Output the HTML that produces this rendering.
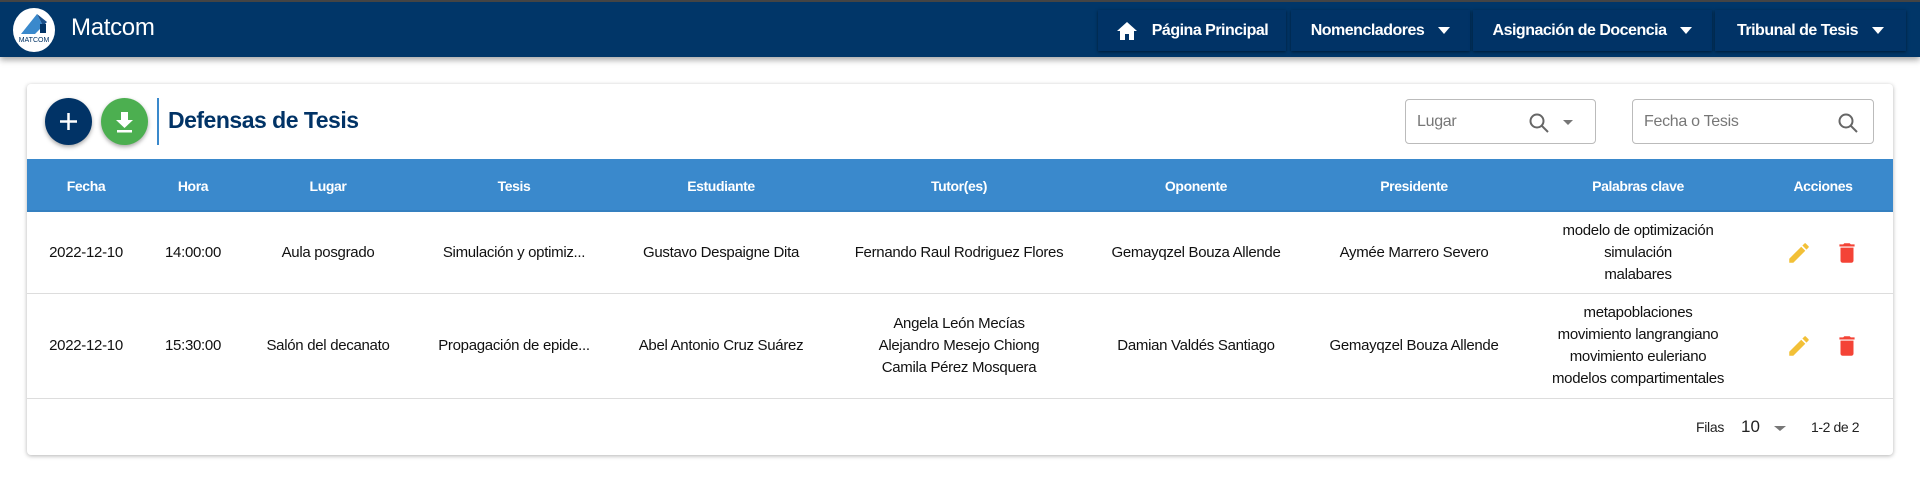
<!DOCTYPE html>
<html><head><meta charset="utf-8"><style>
*{box-sizing:border-box;margin:0;padding:0}
body{width:1920px;height:495px;background:#fff;font-family:"Liberation Sans",sans-serif;position:relative;overflow:hidden;color:#222}
.hdr{position:absolute;left:0;top:0;width:1920px;height:57px;background:#013668;box-shadow:0 3px 6px rgba(0,0,0,.35);border-top:2px solid #444}
.logo{position:absolute;left:13px;top:6px;width:42px;height:44px;border-radius:50%;background:#fff;overflow:hidden}
.brand{position:absolute;left:71px;top:12px;color:#fff;font-size:24px;letter-spacing:-.3px}
.nav{position:absolute;top:8px;height:41px;background:#013366;box-shadow:0 1px 3px rgba(0,0,0,.5);color:#fff;font-weight:bold;font-size:16px;display:flex;align-items:center;justify-content:center;gap:14px;letter-spacing:-.5px}
.caret{width:0;height:0;border-left:6px solid transparent;border-right:6px solid transparent;border-top:7px solid #fff}
.card{position:absolute;left:27px;top:84px;width:1866px;height:371px;border-radius:4px;box-shadow:0 1px 4px rgba(0,0,0,.3);background:#fff}
.fab{position:absolute;top:98px;width:47px;height:47px;border-radius:50%;box-shadow:0 2px 4px rgba(0,0,0,.35)}
.title{position:absolute;left:168px;top:107px;font-size:23px;font-weight:bold;color:#013366;letter-spacing:-.5px}
.inp{position:absolute;top:99px;height:45px;border:1px solid #bbb;border-radius:4px;color:#777;font-size:16px;padding:13px 11px;letter-spacing:-.3px}
.th{position:absolute;left:27px;top:159px;width:1866px;height:53px;background:#3a89cc;border-bottom:2px solid #3580c0}
.c{position:absolute;transform:translateX(-50%);text-align:center;white-space:nowrap}
.th .c{color:#fff;font-weight:bold;font-size:14px;top:19px;letter-spacing:-.4px}
.row{position:absolute;left:27px;width:1866px;border-bottom:1px solid #ddd;font-size:15px;color:#111;letter-spacing:-.3px}
.row .c{line-height:22px}
</style></head><body>
<div class="hdr">
 <div class="logo"><svg width="42" height="44" viewBox="0 0 42 44"><polygon points="8,26 24,6 30,18 22,26" fill="#3a89cc"/><polygon points="24,6 34,14 30,18" fill="#1a4f8a"/><rect x="27" y="16" width="6" height="9" fill="#013366"/><text x="21" y="34" font-size="7" text-anchor="middle" fill="#013366" font-family="Liberation Sans">MATCOM</text></svg></div>
 <div class="brand">Matcom</div>
 <div class="nav" style="left:1098px;width:188px"><svg width="22" height="20" viewBox="0 0 22 20"><path d="M11 1L1 10h3v9h5v-6h4v6h5v-9h3z" fill="#fff"/></svg><span>Página Principal</span></div>
 <div class="nav" style="left:1291px;width:179px"><span>Nomencladores</span><span class="caret"></span></div>
 <div class="nav" style="left:1473px;width:239px"><span>Asignación de Docencia</span><span class="caret"></span></div>
 <div class="nav" style="left:1715px;width:191px"><span>Tribunal de Tesis</span><span class="caret"></span></div>
</div>
<div class="card"></div>
<div class="fab" style="left:45px;background:#013366"><svg width="47" height="47"><path d="M23.5 15v17M15 23.5h17" stroke="#fff" stroke-width="2.5"/></svg></div>
<div class="fab" style="left:101px;background:#4caf50"><svg width="47" height="47"><path d="M20 14h7v8h5l-8.5 8-8.5-8h5z" fill="#fff"/><rect x="16" y="32" width="15" height="2.5" fill="#fff"/></svg></div>
<div style="position:absolute;left:157px;top:98px;width:2px;height:47px;background:#3a89cc"></div>
<div class="title">Defensas de Tesis</div>
<div class="inp" style="left:1405px;width:191px">Lugar
 <svg style="position:absolute;left:122px;top:12px" width="22" height="22"><circle cx="9" cy="9" r="6.5" fill="none" stroke="#666" stroke-width="2"/><path d="M14 14l6 6" stroke="#666" stroke-width="2"/></svg>
 <span style="position:absolute;left:157px;top:20px;border-left:5px solid transparent;border-right:5px solid transparent;border-top:5px solid #777"></span></div>
<div class="inp" style="left:1632px;width:242px">Fecha o Tesis
 <svg style="position:absolute;left:204px;top:12px" width="22" height="22"><circle cx="9" cy="9" r="6.5" fill="none" stroke="#666" stroke-width="2"/><path d="M14 14l6 6" stroke="#666" stroke-width="2"/></svg></div>
<div class="th">
 <span class="c" style="left:59px">Fecha</span><span class="c" style="left:166px">Hora</span><span class="c" style="left:301px">Lugar</span><span class="c" style="left:487px">Tesis</span><span class="c" style="left:694px">Estudiante</span><span class="c" style="left:932px">Tutor(es)</span><span class="c" style="left:1169px">Oponente</span><span class="c" style="left:1387px">Presidente</span><span class="c" style="left:1611px">Palabras clave</span><span class="c" style="left:1796px">Acciones</span>
</div>
<div class="row" style="top:212px;height:82px">
 <span class="c" style="left:59px;top:30px">2022-12-10</span><span class="c" style="left:166px;top:30px">14:00:00</span><span class="c" style="left:301px;top:30px">Aula posgrado</span><span class="c" style="left:487px;top:30px">Simulación y optimiz...</span><span class="c" style="left:694px;top:30px">Gustavo Despaigne Dita</span><span class="c" style="left:932px;top:30px">Fernando Raul Rodriguez Flores</span><span class="c" style="left:1169px;top:30px">Gemayqzel Bouza Allende</span><span class="c" style="left:1387px;top:30px">Aymée Marrero Severo</span>
 <span class="c" style="left:1611px;top:8px">modelo de optimización<br>simulación<br>malabares</span>
 <svg style="position:absolute;left:1759px;top:28px" width="26" height="26" viewBox="0 0 24 24"><path d="M3 17.25V21h3.75L17.81 9.94l-3.75-3.75L3 17.25zM20.71 7.04a1 1 0 000-1.41l-2.34-2.34a1 1 0 00-1.41 0l-1.83 1.83 3.75 3.75 1.83-1.83z" fill="#f2c037"/></svg>
 <svg style="position:absolute;left:1807px;top:28px" width="26" height="26" viewBox="0 0 24 24"><path d="M6 19c0 1.1.9 2 2 2h8c1.1 0 2-.9 2-2V7H6v12zM19 4h-3.5l-1-1h-5l-1 1H5v2h14V4z" fill="#f44336"/></svg>
</div>
<div class="row" style="top:294px;height:105px">
 <span class="c" style="left:59px;top:41px">2022-12-10</span><span class="c" style="left:166px;top:41px">15:30:00</span><span class="c" style="left:301px;top:41px">Salón del decanato</span><span class="c" style="left:487px;top:41px">Propagación de epide...</span><span class="c" style="left:694px;top:41px">Abel Antonio Cruz Suárez</span>
 <span class="c" style="left:932px;top:19px">Angela León Mecías<br>Alejandro Mesejo Chiong<br>Camila Pérez Mosquera</span>
 <span class="c" style="left:1169px;top:41px">Damian Valdés Santiago</span><span class="c" style="left:1387px;top:41px">Gemayqzel Bouza Allende</span>
 <span class="c" style="left:1611px;top:8px">metapoblaciones<br>movimiento langrangiano<br>movimiento euleriano<br>modelos compartimentales</span>
 <svg style="position:absolute;left:1759px;top:39px" width="26" height="26" viewBox="0 0 24 24"><path d="M3 17.25V21h3.75L17.81 9.94l-3.75-3.75L3 17.25zM20.71 7.04a1 1 0 000-1.41l-2.34-2.34a1 1 0 00-1.41 0l-1.83 1.83 3.75 3.75 1.83-1.83z" fill="#f2c037"/></svg>
 <svg style="position:absolute;left:1807px;top:39px" width="26" height="26" viewBox="0 0 24 24"><path d="M6 19c0 1.1.9 2 2 2h8c1.1 0 2-.9 2-2V7H6v12zM19 4h-3.5l-1-1h-5l-1 1H5v2h14V4z" fill="#f44336"/></svg>
</div>
<div style="position:absolute;left:1696px;top:419px;font-size:14px;color:#222;letter-spacing:-.3px">Filas</div>
<div style="position:absolute;left:1741px;top:417px;font-size:17px;color:#222">10</div>
<div style="position:absolute;left:1774px;top:426px;border-left:6px solid transparent;border-right:6px solid transparent;border-top:5px solid #777"></div>
<div style="position:absolute;left:1811px;top:419px;font-size:14px;color:#222;letter-spacing:-.4px">1-2 de 2</div>
</body></html>
